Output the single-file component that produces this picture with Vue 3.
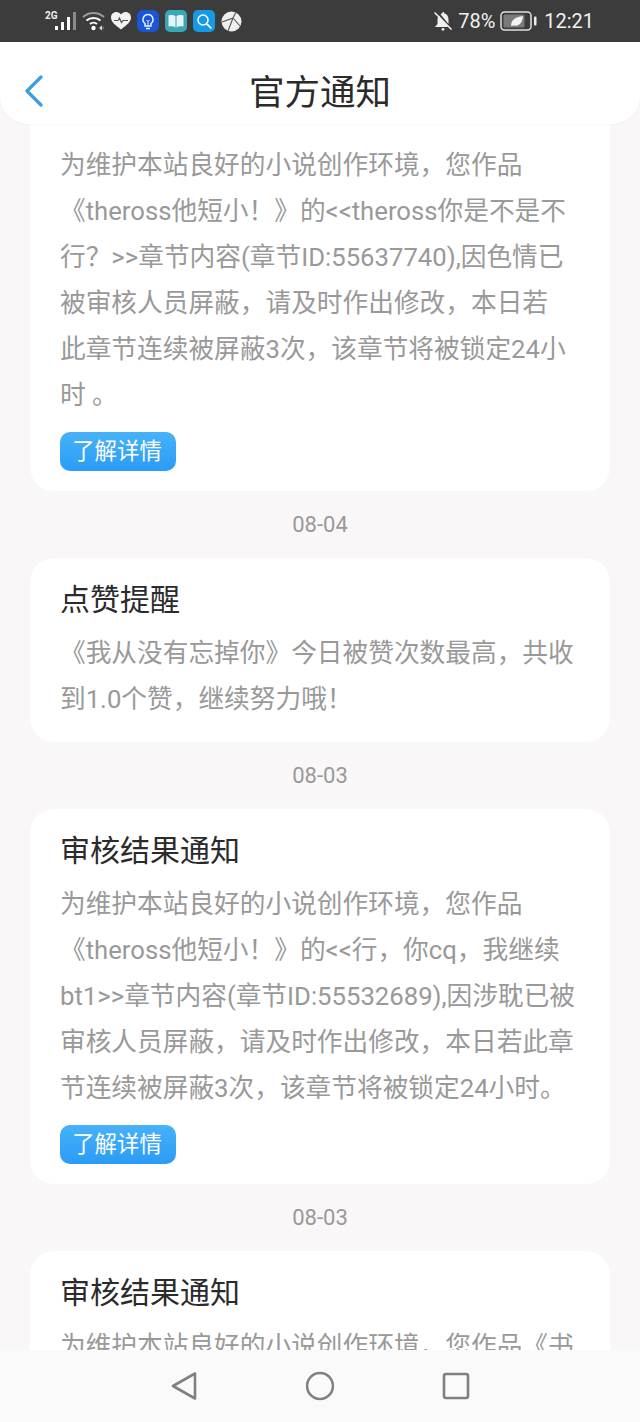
<script setup>
const notices = [
  {
    id: 1,
    lines: [
      '为维护本站良好的小说创作环境，您作品',
      '《theross他短小！》的<<theross你是不是不',
      '行？>>章节内容(章节ID:55637740),因色情已',
      '被审核人员屏蔽，请及时作出修改，本日若',
      '此章节连续被屏蔽3次，该章节将被锁定24小',
      '时 。'
    ],
    action: true
  },
  {
    id: 2,
    date: '08-04',
    title: '点赞提醒',
    lines: [
      '《我从没有忘掉你》今日被赞次数最高，共收',
      '到1.0个赞，继续努力哦！'
    ]
  },
  {
    id: 3,
    date: '08-03',
    title: '审核结果通知',
    lines: [
      '为维护本站良好的小说创作环境，您作品',
      '《theross他短小！》的<<行，你cq，我继续',
      'bt1>>章节内容(章节ID:55532689),因涉耽已被',
      '审核人员屏蔽，请及时作出修改，本日若此章',
      '节连续被屏蔽3次，该章节将被锁定24小时。'
    ],
    action: true
  },
  {
    id: 4,
    date: '08-03',
    title: '审核结果通知',
    lines: ['为维护本站良好的小说创作环境，您作品《书']
  }
]
</script>

<template>
  <div class="page">
    <div class="status-bar">
      <div class="status-left">
        <span class="net">2G</span>
        <svg class="bars" width="21" height="20" viewBox="0 0 21 20">
          <rect x="0" y="15" width="3" height="4" fill="#fff" />
          <rect x="6" y="11" width="3" height="8" fill="#fff" />
          <rect x="12" y="6" width="3" height="13" fill="#fff" />
          <rect x="18" y="1" width="3" height="18" fill="#8a8a8a" />
        </svg>
        <svg class="wifi" width="24" height="20" viewBox="0 0 24 20" fill="none">
          <path d="M1 6c6-5.500 15-5.500 21 0" stroke="#9a9a9a" stroke-width="2" />
          <path d="M4.500 9.500c4-3.500 10-3.500 14 0" stroke="#fff" stroke-width="2" />
          <path d="M8 13c2-1.800 5-1.800 7 0" stroke="#fff" stroke-width="2" />
          <circle cx="11.500" cy="17" r="2.200" fill="#fff" />
          <path d="M17 17l3-2.500v5z" fill="#ddd" />
          <path d="M21 15.500v3" stroke="#888" stroke-width="1" />
        </svg>
        <svg class="heart" width="20" height="18" viewBox="0 0 20 18">
          <path d="M10 17.500C4 13 0 9.800 0 5.500 0 2.300 2.400 0 5.300 0 7.200 0 9 1 10 2.600 11 1 12.800 0 14.700 0 17.600 0 20 2.300 20 5.500c0 4.300-4 7.500-10 12z" fill="#f2f2f2" />
          <path d="M3 8.500h4l1.500-2.500 2 4.500 1.500-2h5" fill="none" stroke="#555" stroke-width="1.200" />
        </svg>
        <svg class="app" width="22" height="22" viewBox="0 0 22 22" fill="none">
          <rect width="22" height="22" rx="6" fill="#1a55d8" />
          <path d="M11 4.500a5 5 0 0 0-3 9v2.500h6v-2.500a5 5 0 0 0-3-9z" stroke="#e8f2ff" stroke-width="1.500" />
          <path d="M9 18.500h4" stroke="#e8f2ff" stroke-width="1.500" />
          <path d="M11 16v-4.500l-1.500-1.500M11 11.500l1.500-1.500" stroke="#e8f2ff" stroke-width="1" />
        </svg>
        <svg class="app" width="22" height="22" viewBox="0 0 22 22">
          <rect width="22" height="22" rx="5" fill="#3aa7b8" />
          <path d="M3.500 5.500c3-.8 5.500-.6 7 1v11c-1.500-1.200-4-1.500-7-1z" fill="#e4f4f7" />
          <path d="M18.500 5.500c-3-.8-5.500-.6-7 1v11c1.500-1.200 4-1.500 7-1z" fill="#e4f4f7" />
        </svg>
        <svg class="app" width="22" height="22" viewBox="0 0 22 22" fill="none">
          <rect width="22" height="22" rx="5" fill="#159ae8" />
          <circle cx="10" cy="10" r="5" stroke="#fff" stroke-width="1.600" />
          <path d="M13.800 13.800l4 4" stroke="#fff" stroke-width="1.800" stroke-linecap="round" />
        </svg>
        <svg class="app" width="21" height="21" viewBox="0 0 21 21" fill="none">
          <circle cx="10.500" cy="10.500" r="10" fill="#eee" />
          <path d="M1 11L12 7l3-6M12 7l7 8M12 7l-5 13" stroke="#555" stroke-width="1.100" />
        </svg>
      </div>
      <div class="status-right">
        <svg class="bell" width="20" height="20" viewBox="0 0 20 20" fill="none">
          <path d="M2 16h13L6 4.500C4.800 6 4.500 7.500 4.500 9.500v3.500zM7.500 3.200C8.200 2.700 9 2.400 9.500 2.300V1h1.500v1.300c3 .6 4.500 3 4.500 6.200v4.500z" fill="#f0f0f0" />
          <path d="M1.500 1.500l17 17" stroke="#f0f0f0" stroke-width="1.600" />
          <circle cx="10" cy="18.300" r="1.400" fill="#f0f0f0" />
        </svg>
        <span class="percent">78%</span>
        <svg class="battery" width="37" height="20" viewBox="0 0 37 20" fill="none">
          <rect x="1" y="1" width="30" height="18" rx="3.500" stroke="#e0e0e0" stroke-width="1.500" />
          <rect x="3.500" y="3.500" width="21" height="13" rx="1.500" fill="#7a7a7a" />
          <path d="M11 15c0-6 4-9 12-10-.5 7-4 10.500-9 9.500z" fill="#f2f2f2" />
          <rect x="34" y="5.500" width="2.500" height="9" rx="1" fill="#eee" />
        </svg>
        <span class="time">12:21</span>
      </div>
    </div>

    <header class="top-bar">
      <button class="back">
        <svg width="18" height="32" viewBox="0 0 18 32" fill="none">
          <path d="M16 2L2 16l14 14" stroke="#3a9fe0" stroke-width="3.200" stroke-linecap="round" stroke-linejoin="round" />
        </svg>
      </button>
      <h1 class="page-title">官方通知</h1>
    </header>

    <main class="list">
      <template v-for="item in notices" :key="item.id">
        <div v-if="item.date" class="date">{{ item.date }}</div>
        <section class="card">
          <h2 v-if="item.title" class="card-title">{{ item.title }}</h2>
          <p v-for="line in item.lines" :key="line" class="card-text">{{ line }}</p>
          <button v-if="item.action" class="detail-btn">了解详情</button>
        </section>
      </template>
    </main>

    <nav class="nav-bar">
      <svg width="28" height="30" viewBox="0 0 28 30" fill="none">
        <path d="M25 2.500v25L3 15z" stroke="#808080" stroke-width="2.600" stroke-linejoin="round" />
      </svg>
      <svg width="28" height="30" viewBox="0 0 28 30" fill="none">
        <circle cx="14" cy="15" r="13" stroke="#808080" stroke-width="2.600" />
      </svg>
      <svg width="28" height="30" viewBox="0 0 28 30" fill="none">
        <rect x="2" y="3" width="24" height="24" rx="2" stroke="#808080" stroke-width="2.600" />
      </svg>
    </nav>
  </div>
</template>

<style scoped>
.page {
  width: 640px;
  height: 1422px;
  display: flex;
  flex-direction: column;
  overflow: hidden;
  background: #f9f7f8;
  font-family: Roboto, "Noto Sans CJK SC", sans-serif;
}

/* status bar */
.status-bar {
  height: 42px;
  flex-shrink: 0;
  box-sizing: border-box;
  padding: 0 46px 0 45px;
  display: flex;
  justify-content: space-between;
  align-items: center;
  background: #3c3c3c;
  color: #f0f0f0;
}
.status-left,
.status-right {
  display: flex;
  align-items: center;
}
.net {
  font-size: 10px;
  font-weight: 700;
  line-height: 10px;
  width: 10px;
  align-self: flex-start;
  margin-top: 1px;
  white-space: nowrap;
}
.wifi { margin-left: 6px; }
.heart { margin-left: 5px; }
.app { margin-left: 6px; }
.percent {
  font-size: 20px;
  margin-left: 5px;
  width: 38px;
}
.battery { margin-left: 4px; }
.time {
  font-size: 20px;
  margin-left: 7px;
}

/* header */
.top-bar {
  height: 82px;
  flex-shrink: 0;
  box-sizing: border-box;
  padding-top: 20px;
  position: relative;
  z-index: 1;
  display: flex;
  align-items: center;
  justify-content: center;
  background: #fff;
  border-radius: 0 0 28px 28px;
  box-shadow: 0 1px 2px rgba(0, 0, 0, 0.03);
}
.back {
  position: absolute;
  left: 25px;
  top: 33px;
  padding: 0;
  border: none;
  background: none;
  display: flex;
}
.page-title {
  margin: 0;
  font-size: 35.5px;
  font-weight: 400;
  line-height: 46px;
  color: #2b2b2b;
}

/* list */
.list {
  flex: 1;
  min-height: 0;
  overflow: hidden;
  padding: 0 30px;
}
.card {
  background: #fff;
  border-radius: 0 0 24px 24px;
  padding: 18px 30px 20px;
}
.date + .card {
  border-radius: 24px;
  padding-top: 19px;
}
.date {
  height: 67px;
  line-height: 67px;
  text-align: center;
  font-size: 22px;
  color: #999;
}
.card-title {
  margin: 0 0 7px;
  font-size: 30px;
  font-weight: 400;
  line-height: 46px;
  color: #2b2b2b;
}
.card-text {
  margin: 0;
  font-size: 25.7px;
  line-height: 46px;
  color: #999;
  white-space: nowrap;
}
.detail-btn {
  display: block;
  margin-top: 14px;
  width: 116px;
  height: 39px;
  padding: 0 2px 0 0;
  border: none;
  border-radius: 10px;
  background: linear-gradient(#47b2f9, #2a9cf6);
  color: #fff;
  font-family: inherit;
  font-size: 22.4px;
  line-height: 39px;
}

/* bottom navigation */
.nav-bar {
  height: 72px;
  flex-shrink: 0;
  display: flex;
  justify-content: center;
  align-items: center;
  gap: 108px;
  background: #fafafa;
}
</style>
